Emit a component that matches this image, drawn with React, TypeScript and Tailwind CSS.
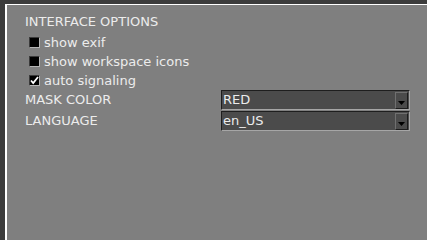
const font = { fontFamily: '"DejaVu Sans", "Liberation Sans", sans-serif' };

function CheckRow({ label, checked }: { label: string; checked?: boolean }) {
  return (
    <div className="flex h-[19px] items-center pl-[4px]">
      <span className="flex h-[11px] w-[11px] items-center justify-center border border-t-[#3a3a3a] border-l-[#3a3a3a] border-b-[#b4b4b4] border-r-[#b4b4b4] bg-black">
        {checked && (
          <svg width="9" height="9" viewBox="0 0 9 9">
            <path d="M1 4.5 L3.2 7 L8 1" stroke="#ffffff" strokeWidth="1.8" fill="none" />
          </svg>
        )}
      </span>
      <span className="ml-[4px] leading-[19px]">{label}</span>
    </div>
  );
}

function SelectRow({ label, value }: { label: string; value: string }) {
  return (
    <div className="flex h-[20px] items-center">
      <span className="w-[196px] leading-[20px]">{label}</span>
      <div className="flex h-[20px] w-[189px] items-center border border-t-[#1e1e1e] border-l-[#1e1e1e] border-b-[#a6a6a6] border-r-[#a6a6a6] bg-[#4b4b4b] pl-[1px]">
        <span className="flex-1 leading-[18px]">{value}</span>
        <span className="mr-[1px] flex h-[17px] w-[13px] items-end justify-center border border-t-[#707070] border-l-[#707070] border-b-[#1c1c1c] border-r-[#1c1c1c] bg-[#4b4b4b] pb-[3px]">
          <svg width="7" height="4" viewBox="0 0 7 4">
            <path d="M0 0 H7 L3.5 4 Z" fill="#000000" />
          </svg>
        </span>
      </div>
    </div>
  );
}

export default function App() {
  return (
    <div className="flex h-screen min-h-[201px] w-full flex-col overflow-hidden bg-[#3c3c3c] pl-[5px] pt-[4px]" style={font}>
      <div className="flex-1 border-l-2 border-t border-white bg-[#7f7f7f] pl-[18px] pt-[7px] text-[13px] text-[#ececec]">
        <div className="h-[21px] leading-[20px]">INTERFACE OPTIONS</div>
        <CheckRow label="show exif" />
        <CheckRow label="show workspace icons" />
        <CheckRow label="auto signaling" checked />
        <SelectRow label="MASK COLOR" value="RED" />
        <div className="h-px" />
        <SelectRow label="LANGUAGE" value="en_US" />
      </div>
    </div>
  );
}
